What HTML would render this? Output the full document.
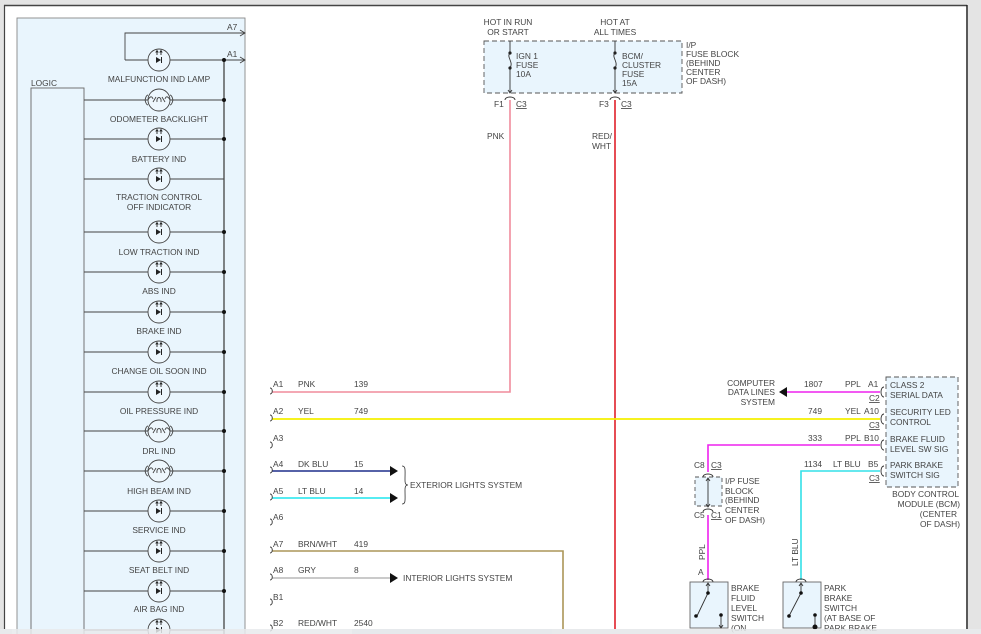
<!DOCTYPE html>
<html><head><meta charset="utf-8"><style>
html,body{margin:0;padding:0;background:#fff;width:981px;height:634px;overflow:hidden}
svg{display:block}
text{font-family:"Liberation Sans",sans-serif;font-size:8.4px;fill:#444}
</style></head><body>
<svg width="981" height="634" viewBox="0 0 981 634" xmlns="http://www.w3.org/2000/svg">
<defs>
<g id="led">
<circle r="11" fill="#eef7fd" stroke="#444" stroke-width="0.9"/>
<path d="M-3,-3 L2,0 L-3,3 Z" fill="#222"/>
<line x1="2.5" y1="-3" x2="2.5" y2="3" stroke="#222" stroke-width="1"/>
<path d="M-2,-5 V-9 M2,-5 V-9" stroke="#222" stroke-width="0.9"/>
<path d="M-3.3,-7.5 L-2,-9.5 L-0.7,-7.5 M0.7,-7.5 L2,-9.5 L3.3,-7.5" fill="none" stroke="#222" stroke-width="0.8"/>
</g>
<g id="bulb">
<circle r="11" fill="#eef7fd" stroke="#444" stroke-width="0.9"/>
<path d="M-11,0 C-9,-4 -7,-4 -6,-1 M11,0 C9,-4 7,-4 6,-1 M-14,0 C-13,-4 -12,-5 -11,-5 M14,0 C13,-4 12,-5 11,-5 M-14,0 C-13,4 -12,5 -11,5 M14,0 C13,4 12,5 11,5" fill="none" stroke="#444" stroke-width="0.9"/>
<path d="M-6,2 L-3,-3 M6,2 L3,-3 M-2,2 C-3,-4 3,-4 2,2" fill="none" stroke="#444" stroke-width="0.9"/>
</g>
<path id="cb" d="M0,-6 C3,-6 3,0 0,0" fill="none" stroke="#333" stroke-width="0.9"/>
</defs>
<!-- frame -->
<rect x="0" y="0" width="981" height="634" fill="#e4e4e4"/>
<rect x="4" y="5" width="964" height="624" fill="#fff"/>
<line x1="4" y1="5.5" x2="967" y2="5.5" stroke="#444" stroke-width="1.5"/>
<line x1="4.5" y1="5" x2="4.5" y2="629" stroke="#444" stroke-width="1.2"/>
<line x1="967" y1="5" x2="967" y2="629" stroke="#222" stroke-width="1.5"/>
<rect x="0" y="629" width="981" height="5" fill="#e8eaec"/>
<rect x="12" y="629" width="340" height="5" fill="#fff"/>
<rect x="352" y="629" width="200" height="5" fill="#dde3ea"/>

<!-- cluster panel -->
<rect x="17" y="18" width="228" height="620" fill="#e9f5fd" stroke="#888" stroke-width="0.9"/>
<rect x="31" y="88" width="53" height="550" fill="#e9f5fd" stroke="#666" stroke-width="0.9"/>
<text x="31" y="86">LOGIC</text>
<line x1="224" y1="60" x2="224" y2="634" stroke="#444" stroke-width="1.3"/>
<path d="M125,60 V33 H245 M240,30 L245,33 L240,36 M224,60 H245 M240,57 L245,60 L240,63" fill="none" stroke="#444" stroke-width="0.9"/>
<text x="227" y="30">A7</text><text x="227" y="57">A1</text>
<g stroke="#444" stroke-width="0.9">
<line x1="125" y1="60" x2="224" y2="60"/>
<line x1="84" y1="100" x2="224" y2="100"/><line x1="84" y1="139" x2="224" y2="139"/>
<line x1="84" y1="179" x2="224" y2="179"/><line x1="84" y1="232" x2="224" y2="232"/>
<line x1="84" y1="272" x2="224" y2="272"/><line x1="84" y1="312" x2="224" y2="312"/>
<line x1="84" y1="352" x2="224" y2="352"/><line x1="84" y1="392" x2="224" y2="392"/>
<line x1="84" y1="431" x2="224" y2="431"/><line x1="84" y1="471" x2="224" y2="471"/>
<line x1="84" y1="511" x2="224" y2="511"/><line x1="84" y1="551" x2="224" y2="551"/>
<line x1="84" y1="591" x2="224" y2="591"/><line x1="84" y1="630" x2="224" y2="630"/>
</g>
<g fill="#111">
<circle cx="224" cy="60" r="2"/><circle cx="224" cy="100" r="2"/><circle cx="224" cy="139" r="2"/>
<circle cx="224" cy="232" r="2"/><circle cx="224" cy="272" r="2"/><circle cx="224" cy="312" r="2"/>
<circle cx="224" cy="352" r="2"/><circle cx="224" cy="392" r="2"/><circle cx="224" cy="431" r="2"/>
<circle cx="224" cy="471" r="2"/><circle cx="224" cy="511" r="2"/><circle cx="224" cy="551" r="2"/>
<circle cx="224" cy="591" r="2"/>
</g>
<use href="#led" x="159" y="60"/><use href="#bulb" x="159" y="100"/><use href="#led" x="159" y="139"/>
<use href="#led" x="159" y="179"/><use href="#led" x="159" y="232"/><use href="#led" x="159" y="272"/>
<use href="#led" x="159" y="312"/><use href="#led" x="159" y="352"/><use href="#led" x="159" y="392"/>
<use href="#bulb" x="159" y="431"/><use href="#bulb" x="159" y="471"/><use href="#led" x="159" y="511"/>
<use href="#led" x="159" y="551"/><use href="#led" x="159" y="591"/><use href="#led" x="159" y="630"/>
<g text-anchor="middle">
<text x="159" y="82">MALFUNCTION IND LAMP</text>
<text x="159" y="122">ODOMETER BACKLIGHT</text>
<text x="159" y="162">BATTERY IND</text>
<text x="159" y="200">TRACTION CONTROL</text>
<text x="159" y="210">OFF INDICATOR</text>
<text x="159" y="255">LOW TRACTION IND</text>
<text x="159" y="294">ABS IND</text>
<text x="159" y="334">BRAKE IND</text>
<text x="159" y="374">CHANGE OIL SOON IND</text>
<text x="159" y="414">OIL PRESSURE IND</text>
<text x="159" y="454">DRL IND</text>
<text x="159" y="494">HIGH BEAM IND</text>
<text x="159" y="533">SERVICE IND</text>
<text x="159" y="573">SEAT BELT IND</text>
<text x="159" y="612">AIR BAG IND</text>
</g>

<!-- fuse block -->
<rect x="484" y="41" width="198" height="52" fill="#e9f5fd" stroke="#555" stroke-width="0.9" stroke-dasharray="5,3"/>
<g text-anchor="middle"><text x="508" y="25">HOT IN RUN</text><text x="508" y="35">OR START</text>
<text x="615" y="25">HOT AT</text><text x="615" y="35">ALL TIMES</text></g>
<text x="686" y="48">I/P</text><text x="686" y="57">FUSE BLOCK</text><text x="686" y="66">(BEHIND</text><text x="686" y="75">CENTER</text><text x="686" y="84">OF DASH)</text>
<g stroke="#333" stroke-width="0.9" fill="none">
<path d="M510,41 V53 M510,68 V93 M508,90 L510,93 L512,90 M510,53 C506,57 514,62 510,68"/>
<path d="M615,41 V53 M615,68 V93 M613,90 L615,93 L617,90 M615,53 C611,57 619,62 615,68"/>
<path d="M505,100 C505,96 515,96 515,100 M610,100 C610,96 620,96 620,100"/>
</g>
<circle cx="510" cy="53" r="1.6" fill="#222"/><circle cx="510" cy="68" r="1.6" fill="#222"/>
<circle cx="615" cy="53" r="1.6" fill="#222"/><circle cx="615" cy="68" r="1.6" fill="#222"/>
<text x="516" y="59">IGN 1</text><text x="516" y="68">FUSE</text><text x="516" y="77">10A</text>
<text x="622" y="59">BCM/</text><text x="622" y="68">CLUSTER</text><text x="622" y="77">FUSE</text><text x="622" y="86">15A</text>
<text x="494" y="107">F1</text><text x="516" y="107" text-decoration="underline">C3</text>
<text x="599" y="107">F3</text><text x="621" y="107" text-decoration="underline">C3</text>
<text x="487" y="139">PNK</text><text x="592" y="139">RED/</text><text x="592" y="149">WHT</text>

<!-- wires -->
<path d="M272,392 H510 V100" fill="none" stroke="#f08c9c" stroke-width="1.6"/>
<line x1="615" y1="100" x2="615" y2="629" stroke="#e0202a" stroke-width="1.6"/>
<line x1="272" y1="419" x2="880" y2="419" stroke="#f5f000" stroke-width="1.8"/>
<line x1="272" y1="471" x2="392" y2="471" stroke="#1e2f8c" stroke-width="1.6"/>
<line x1="272" y1="498" x2="392" y2="498" stroke="#1ee6ee" stroke-width="1.6"/>
<path d="M272,551 H563 V629" fill="none" stroke="#ab9658" stroke-width="1.6"/>
<line x1="272" y1="578" x2="392" y2="578" stroke="#aaa" stroke-width="1.2"/>
<g fill="#111"><path d="M390,466 L398,471 L390,476Z"/><path d="M390,493 L398,498 L390,503Z"/><path d="M390,573 L398,578 L390,583Z"/><path d="M787,392 L779,392 L787,387 Z M787,392 L779,392 L787,397Z"/></g>
<path d="M402,466 C406,466 405,470 405,480 C405,484 406,485 408,485 C406,485 405,486 405,490 C405,500 406,504 402,504" fill="none" stroke="#333" stroke-width="0.8"/>
<text x="410" y="488">EXTERIOR LIGHTS SYSTEM</text>
<text x="403" y="581">INTERIOR LIGHTS SYSTEM</text>
<g>
<use href="#cb" x="270" y="394"/><use href="#cb" x="270" y="421"/><use href="#cb" x="270" y="448"/>
<use href="#cb" x="270" y="473"/><use href="#cb" x="270" y="500"/><use href="#cb" x="270" y="525"/>
<use href="#cb" x="270" y="553"/><use href="#cb" x="270" y="580"/><use href="#cb" x="270" y="605"/><use href="#cb" x="270" y="631"/>
</g>
<text x="273" y="387">A1</text><text x="298" y="387">PNK</text><text x="354" y="387">139</text>
<text x="273" y="414">A2</text><text x="298" y="414">YEL</text><text x="354" y="414">749</text>
<text x="273" y="441">A3</text>
<text x="273" y="467">A4</text><text x="298" y="467">DK BLU</text><text x="354" y="467">15</text>
<text x="273" y="494">A5</text><text x="298" y="494">LT BLU</text><text x="354" y="494">14</text>
<text x="273" y="520">A6</text>
<text x="273" y="547">A7</text><text x="298" y="547">BRN/WHT</text><text x="354" y="547">419</text>
<text x="273" y="573">A8</text><text x="298" y="573">GRY</text><text x="354" y="573">8</text>
<text x="273" y="600">B1</text>
<text x="273" y="626">B2</text><text x="298" y="626">RED/WHT</text><text x="354" y="626">2540</text>

<!-- BCM -->
<rect x="886" y="377" width="72" height="110" fill="#e9f5fd" stroke="#555" stroke-width="0.9" stroke-dasharray="5,3"/>
<line x1="787" y1="392" x2="880" y2="392" stroke="#ee22ee" stroke-width="1.6"/>
<path d="M880,445 H708 V472" fill="none" stroke="#ee22ee" stroke-width="1.6"/>
<path d="M708,515 V580" fill="none" stroke="#ee22ee" stroke-width="1.6"/>
<path d="M880,471 H801 V580" fill="none" stroke="#33e0e8" stroke-width="1.6"/>
<g stroke="#333" stroke-width="0.9" fill="none">
<path d="M884,387 C880,387 880,397 884,397 M884,414 C880,414 880,424 884,424 M884,440 C880,440 880,450 884,450 M884,466 C880,466 880,476 884,476"/>
</g>
<text x="890" y="388">CLASS 2</text><text x="890" y="398">SERIAL DATA</text>
<text x="890" y="415">SECURITY LED</text><text x="890" y="425">CONTROL</text>
<text x="890" y="442">BRAKE FLUID</text><text x="890" y="452">LEVEL SW SIG</text>
<text x="890" y="468">PARK BRAKE</text><text x="890" y="478">SWITCH SIG</text>
<g text-anchor="end">
<text x="959" y="497">BODY CONTROL</text><text x="960" y="507">MODULE (BCM)</text><text x="957" y="517">(CENTER</text><text x="960" y="527">OF DASH)</text>
<text x="775" y="386">COMPUTER</text><text x="775" y="395">DATA LINES</text><text x="775" y="405">SYSTEM</text>
</g>
<text x="804" y="387">1807</text><text x="845" y="387">PPL</text><text x="868" y="387">A1</text><text x="869" y="401" text-decoration="underline">C2</text>
<text x="808" y="414">749</text><text x="845" y="414">YEL</text><text x="864" y="414">A10</text><text x="869" y="428" text-decoration="underline">C3</text>
<text x="808" y="441">333</text><text x="845" y="441">PPL</text><text x="864" y="441">B10</text>
<text x="804" y="467">1134</text><text x="833" y="467">LT BLU</text><text x="868" y="467">B5</text><text x="869" y="481" text-decoration="underline">C3</text>

<!-- small fuse block -->
<rect x="695" y="477" width="27" height="29" fill="#e9f5fd" stroke="#555" stroke-width="0.9" stroke-dasharray="4,3"/>
<g stroke="#333" stroke-width="0.9" fill="none">
<path d="M703,477 C703,473 713,473 713,477 M703,512 C703,508 713,508 713,512 M708,478 V507 M706,481 L708,478 L710,481 M706,504 L708,507 L710,504"/>
</g>
<text x="694" y="468">C8</text><text x="711" y="468" text-decoration="underline">C3</text>
<text x="694" y="518">C5</text><text x="711" y="518" text-decoration="underline">C1</text>
<text x="725" y="484">I/P FUSE</text><text x="725" y="494">BLOCK</text><text x="725" y="503">(BEHIND</text><text x="725" y="513">CENTER</text><text x="725" y="523">OF DASH)</text>
<text transform="translate(705,560) rotate(-90)">PPL</text>
<text transform="translate(798,566) rotate(-90)">LT BLU</text>
<text x="698" y="575">A</text>

<!-- switches -->
<rect x="690" y="582" width="38" height="46" fill="#e9f5fd" stroke="#666" stroke-width="0.9"/>
<rect x="783" y="582" width="38" height="46" fill="#e9f5fd" stroke="#666" stroke-width="0.9"/>
<g stroke="#333" stroke-width="0.9" fill="none">
<path d="M703,582 C703,578 713,578 713,582 M708,583 V593 M706,586 L708,583 L710,586 M708,593 L697,616"/>
<path d="M796,582 C796,578 806,578 806,582 M801,583 V593 M799,586 L801,583 L803,586 M801,593 L789,616"/>
<path d="M721,615 V628 M719,625 L721,628 L723,625 M815,615 V628"/>
</g>
<g fill="#111"><circle cx="708" cy="593" r="1.8"/><circle cx="696" cy="616" r="1.8"/><circle cx="721" cy="615" r="1.8"/>
<circle cx="801" cy="593" r="1.8"/><circle cx="789" cy="616" r="1.8"/><circle cx="815" cy="615" r="1.8"/><circle cx="815" cy="627" r="2.5"/></g>
<text x="731" y="591">BRAKE</text><text x="731" y="601">FLUID</text><text x="731" y="611">LEVEL</text><text x="731" y="621">SWITCH</text><text x="731" y="631">(ON</text>
<text x="824" y="591">PARK</text><text x="824" y="601">BRAKE</text><text x="824" y="611">SWITCH</text><text x="824" y="621">(AT BASE OF</text><text x="824" y="631">PARK BRAKE</text>
<rect x="0" y="629" width="981" height="5" fill="#e8eaec" opacity="0.85"/>
</svg>
</body></html>
